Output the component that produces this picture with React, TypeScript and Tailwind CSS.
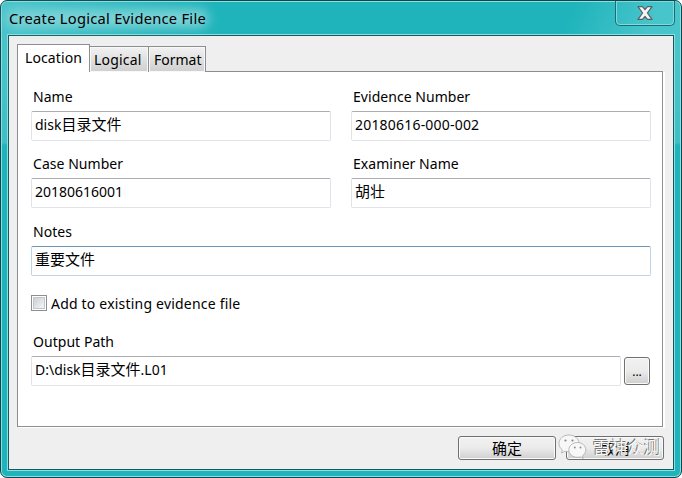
import type { ReactNode } from "react";

function Field({ label, children, className = "", active = false }: { label: string; children: ReactNode; className?: string; active?: boolean }) {
  return (
    <div className={`shrink-0 ${className}`}>
      <div className="h-5 pl-0.5 text-[14px] leading-5 tracking-[0.04px] whitespace-nowrap">{label}</div>
      <div
        className={`mt-1 h-[30px] rounded-[2px] border bg-white pl-[3px] text-[14px] leading-[26px] whitespace-nowrap ${
          active ? "border-[#bcd5e8] border-t-[#6c94b4]" : "border-[#e0e3ea] border-t-[#abadb3]"
        }`}
      >
        {children}
      </div>
    </div>
  );
}

function Han({ children }: { children: string }) {
  return <span className="text-[15px] leading-[24px]">{children}</span>;
}

function PushButton({ children, className }: { children?: ReactNode; className: string }) {
  return (
    <div
      className={`flex items-center justify-center rounded-[3px] border border-[#707070] bg-linear-to-b from-[#f2f2f2] from-0% via-[#ebebeb] via-50% to-[#cfcfcf] shadow-[inset_0_0_0_1px_#fafafa] ${className}`}
    >
      {children}
    </div>
  );
}

function Watermark() {
  return (
    <div className="absolute top-[433px] left-[558px] flex h-7 items-center">
      <svg width="32" height="28" viewBox="0 0 32 28" fill="#f8f8f8" stroke="#a0a0a0" strokeWidth="0.7">
        <path d="M11 2C5 2 1 5.800 1 10.500c0 2.700 1.300 4.800 3.400 6.400L3.500 20l3.600-1.800c1.300.4 2.500.6 3.900.6 6 0 10-3.700 10-8.300S17 2 11 2Z" />
        <path d="M19.500 9.500c-5 0-8.700 3.300-8.700 7.400s3.700 7.400 8.700 7.400c1 0 2-.2 3-.4l2.700 1.500-.7-2.600c2-1.400 3.300-3.500 3.300-5.900 0-4.100-3.700-7.400-8.300-7.400Z" />
        <g fill="#888" stroke="none">
          <circle cx="7.500" cy="7.500" r="1.100" />
          <circle cx="14.500" cy="7.500" r="1.100" />
          <circle cx="16.800" cy="14.500" r="0.900" />
          <circle cx="22.500" cy="14.500" r="0.900" />
        </g>
      </svg>
      <span className="mt-0.5 ml-[3px] text-[17px] leading-7 whitespace-nowrap text-[#f8f8f8] [text-shadow:-1px_-1px_0_#777]">雷神众测</span>
    </div>
  );
}

export default function App() {
  return (
    <div className="relative h-[478px] w-[682px] overflow-hidden bg-white font-['Noto_Sans','Noto_Sans_CJK_SC',sans-serif] text-black">
      <div className="h-full rounded-[7px] border border-[#0c484c] bg-[linear-gradient(to_bottom,#48c4cb_0px,#48c4cb_60px,#3cbfc6_142px,#1fb4bb_144px)] shadow-[inset_0_0_0_1px_#8edde1]">
        <header className="m-px mb-0 flex h-[33px] justify-between rounded-t-[6px] bg-[linear-gradient(115deg,#48c4cb_0%,#1fb4bb_28%,#1fb4bb_83%,#48c4cb_95%)] pl-[7px]">
          <h1 className="relative text-[14.700px] leading-[33px] tracking-[0.260px] whitespace-nowrap">
            <span className="absolute top-[7px] -left-1 h-[19px] w-[204px] rounded-full bg-[#7dd3d7] blur-[6px]" />
            <span className="relative">Create Logical Evidence File</span>
          </h1>
          <div className="-mt-px mr-[5px] flex h-[25px] w-[60px] items-center justify-center rounded-b-[5px] border border-t-0 border-[#176f76] shadow-[inset_0_0_0_1px_#83d8dd]">
            <svg width="16" height="14" viewBox="0 0 16 14">
              <path d="M1 .6h4.500L8 3.500 10.500.6H15L10.400 7l4.600 6.400h-4.500L8 10.500l-2.500 2.900H1L5.600 7Z" fill="#f4f4f4" stroke="#566066" strokeWidth="1.200" strokeLinejoin="round" />
            </svg>
          </div>
        </header>
        <main className="mx-[7px] h-[435px] border border-[#17585d] bg-[#efefef] px-2 pt-2 shadow-[0_0_0_1px_#8edde1]">
          <nav className="flex h-7 items-end text-[14px] whitespace-nowrap">
            <div className="relative z-10 h-7 w-[73px] border border-b-0 border-[#8c8e94] bg-white pl-[7px] leading-[26px] tracking-[0.100px]">Location</div>
            <div className="h-[26px] w-[59px] border border-b-0 border-l-0 border-[#8c8e94] bg-linear-to-b from-[#f2f2f2] to-[#cfcfcf] pl-1 leading-[25px] tracking-[0.200px] shadow-[inset_0_0_0_1px_#f8f8f8]">Logical</div>
            <div className="h-[26px] w-[57px] border border-b-0 border-l-0 border-[#8c8e94] bg-linear-to-b from-[#f2f2f2] to-[#cfcfcf] pl-[5px] leading-[25px] shadow-[inset_0_0_0_1px_#f8f8f8]">Format</div>
          </nav>
          <section className="-mt-px h-[356px] w-[646px] border border-[#8c8e94] bg-white px-[13px] pt-[15px] shadow-[2px_1px_0_#fff]">
            <div className="flex gap-5">
              <Field label="Name" className="w-[300px]">disk<Han>目录文件</Han></Field>
              <Field label="Evidence Number" className="w-[300px]"><span className="tracking-[0.200px]">20180616-000-002</span></Field>
            </div>
            <div className="mt-[13px] flex gap-5">
              <Field label="Case Number" className="w-[300px]">20180616001</Field>
              <Field label="Examiner Name" className="w-[300px]"><Han>胡壮</Han></Field>
            </div>
            <Field label="Notes" className="mt-[14px] w-[620px]" active><Han>重要文件</Han></Field>
            <div className="mt-[18px] flex h-[18px] items-center">
              <div className="h-4 w-4 border border-[#8e8f8f] bg-white p-px">
                <div className="h-3 w-3 border border-[#c3c6ca] bg-linear-to-br from-[#cbcfd5] to-[#f6f6f6]" />
              </div>
              <span className="mt-0.5 ml-1 text-[14px] leading-[18px] tracking-[0.200px] whitespace-nowrap">Add to existing evidence file</span>
            </div>
            <div className="mt-5 flex items-end gap-[3px]">
              <Field label="Output Path" className="w-[590px]">D:\disk<Han>目录文件</Han>.L01</Field>
              <PushButton className="mb-px h-7 w-[26px] shrink-0 pt-0.5 text-[12px]">...</PushButton>
            </div>
          </section>
          <footer className="mt-[9px] mr-px flex justify-end gap-[10px]">
            <PushButton className="h-6 w-[98px] text-[15px]">确定</PushButton>
            <PushButton className="h-6 w-[98px] text-[15px]">取消</PushButton>
          </footer>
        </main>
      </div>
      <Watermark />
    </div>
  );
}
